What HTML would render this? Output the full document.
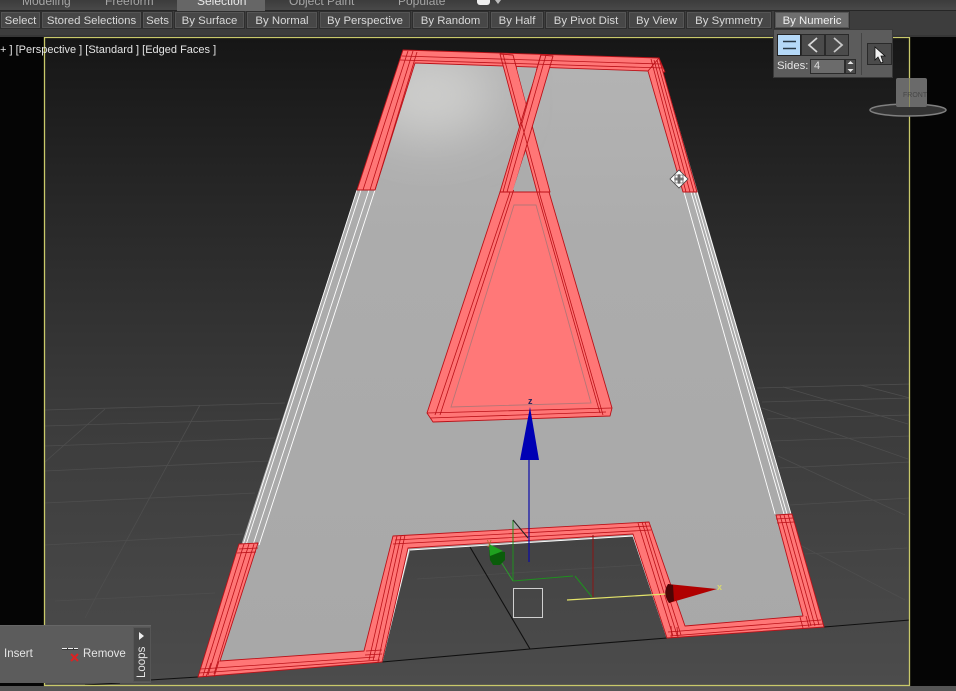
<!DOCTYPE html>
<html><head><meta charset="utf-8">
<style>
html,body{margin:0;padding:0;background:#000}
#r{position:relative;width:956px;height:691px;overflow:hidden;font-family:"Liberation Sans",sans-serif;color:#e2e2e2;font-size:11.5px}
#r svg{position:absolute;left:0;top:0}
.t{position:absolute;white-space:nowrap}
.b{position:absolute;top:11px;height:18px;line-height:18px;background:#474747;border:1px solid #2e2e2e;box-sizing:border-box;text-align:center;box-shadow:inset 0 0 0 1px #555;color:#d8d8d8;font-size:11.4px}
.tab{position:absolute;top:-6px;font-size:12px;color:#a5a5a5;white-space:nowrap}
</style></head><body><div id="r">
<svg width="956" height="691" viewBox="0 0 956 691">
<defs>
<linearGradient id="bg" x1="0" y1="0" x2="0" y2="1"><stop offset="0" stop-color="#161616"/><stop offset=".25" stop-color="#272727"/><stop offset=".6" stop-color="#3c3c3c"/><stop offset="1" stop-color="#4c4c4c"/></linearGradient>
<linearGradient id="gr" x1="0" y1="0" x2="0" y2="1"><stop offset="0" stop-color="#b4b4b4"/><stop offset=".3" stop-color="#acacac"/><stop offset="1" stop-color="#a8a8a8"/></linearGradient>
<filter id="bl" x="-60%" y="-60%" width="220%" height="220%"><feGaussianBlur stdDeviation="26"/></filter>
<clipPath id="ac"><path d="M403 50L659 58L824 627L667 638L633 536L410 550L382 662L198 677Z"/></clipPath>
</defs>
<rect width="956" height="691" fill="#050505"/>
<rect x="44" y="37" width="866" height="649" fill="url(#bg)"/>
<rect x="0" y="686" width="956" height="5" fill="#555"/>
<!-- grid -->
<g stroke="#4e4e4e" stroke-width=".8" fill="none">
<path d="M45 410L285 403M45 426L280 419M45 446L275 438M45 471L268 461M45 503L255 493M45 545L243 534M55 601L215 593"/>
<path d="M45 462L105 409M200 405L98 593L85 618"/>
<path d="M757 388L910 384M762 402L910 398M767 419L910 415M772 441L910 436M780 468L910 462M790 505L910 498M805 554L907 548"/>
<path d="M783 387L908 424M860 385L910 398M762 408L908 459M778 456L905 515M800 545L905 600"/>
<path d="M417 579L640 565"/>
</g>
<path d="M85 685L120 683M150 680L198 677M382 662L530 649L667 638M824 627L910 620M470 547L530 649" stroke="#101010" stroke-width="1.1" fill="none"/>
<!-- yellow frame -->
<path d="M44.500 37.500H910M909.500 37V686M44.500 37V686M44 685.500H910" stroke="#c9c96a" stroke-width="1.3" fill="none"/>
<!-- A grey -->
<path d="M403 50L659 58L824 627L667 638L633 536L410 550L382 662L198 677Z" fill="url(#gr)"/>
<g clip-path="url(#ac)"><ellipse cx="430" cy="95" rx="65" ry="42" fill="#cfcfcd" filter="url(#bl)"/></g>
<!-- white lines -->
<g stroke="#fff" stroke-width=".9" fill="none">
<path d="M357 190L243 545M361 190L246 545M369 190L253 545M375 190L259 545"/>
<path d="M684 192L775 514M691 192L784 514M694 192L787 514M697 192L791 514"/>
<path d="M410 550L633 536M409 549L382 662M633 536L667 638"/>
</g>
<!-- red bands -->
<g fill="#ff7676" stroke="#bb1118" stroke-width=".9" stroke-linejoin="round">
<path d="M403 50L659 58L665 72L648 71L415 63L375 190L357 190Z"/>
<path d="M659 58L697 192L683 192L648 71Z"/>
<path d="M500 54L513 55L550 192L537 192Z"/>
<path d="M541 55L553 56L513 192L500 192Z"/>
<path d="M500 192L549 192L612 408L610 416L433 422L427 413Z"/>
<path d="M239 544L258 543L220 661L364 651L393 536L649 522L685 626L803 616L776 515L792 514L824 627L667 638L633 534L408 548L382 662L198 677Z"/>
</g>
<!-- grey triangles over centre -->
<path d="M517 69L537 70L526 103Z" fill="#b2b2b2"/>
<path d="M524 155L535 190L513 190Z" fill="#acacac"/>
<!-- inner lines -->
<g stroke="#bb1118" stroke-width=".8" fill="none">
<path d="M402 56L661 64M400 60L663 68"/>
<path d="M408 51L363 190M413 51L370 190M417 52L375 190"/>
<path d="M651 59L686 192M654 60L690 192M657 60L694 192"/>
<path d="M503 54L540 192M541 54L503 192M546 55L507 192"/>
<path d="M501 192H549"/>
<path d="M510 192L435 415M513 192L440 415"/>
<path d="M537 192L600 413M539 192L603 415"/>
<path d="M427 413L612 408M430 418L606 412"/>
<path d="M244 544L203 676M249 544L208 675M254 544L214 674"/>
<path d="M239 549L258 548M237 553L256 552"/>
<path d="M201 669L375 657M199 673L380 660"/>
<path d="M219 661L214 677M211 663L206 677"/>
<path d="M397 536L369 660M401 536L373 661M405 535L378 662M366 651L382 650M365 655L382 654"/>
<path d="M395 540L650 526M393 544L651 530"/>
<path d="M638 523L673 636M642 522L677 635M645 522L681 635"/>
<path d="M668 632L821 620M670 636L823 624M671 626L672 638M677 627L678 638"/>
<path d="M780 515L811 626M784 515L815 626M788 514L819 625M776 519L793 518M777 523L794 522"/>
<path d="M800 617L803 628M806 616L809 627"/>
</g>
<path d="M514 205L536 205L591 403L451 407Z" fill="#ff7878" stroke="#b57676" stroke-width=".9"/>
<!-- transform gizmo -->
<path d="M529 562V425" stroke="#0a0aa8" stroke-width="1.2"/>
<path d="M520 460L539 460L530 407Z" fill="#0000b4"/>
<text x="528" y="404" font-family="Liberation Sans,sans-serif" font-size="9" font-weight="700" fill="#22225a">z</text>
<path d="M513 520V580M513 581L573 576M575 576L592 597" stroke="#1f8f1f" stroke-width="1" fill="none"/>
<path d="M513 520L528 538" stroke="#222" fill="none"/>
<path d="M513 581L498 557" stroke="#2c9c2c" stroke-width="1"/>
<path d="M489 550L505 552V560L500 565H493L490 560Z" fill="#0a5c0a"/>
<path d="M489 544L503 551L490 556Z" fill="#1fa01f"/>
<text x="487" y="545" font-family="Liberation Sans,sans-serif" font-size="9" fill="#b06a30">y</text>
<path d="M593 535V597" stroke="#8a1515" stroke-width="1"/>
<path d="M567 600L666 594" stroke="#e3e36a" stroke-width="1.2"/>
<path d="M668 584L717 589L669 603Z" fill="#b00000"/>
<path d="M668 584Q662 593 669 603L674 601L673 585Z" fill="#4c0505"/>
<text x="717" y="590" font-family="Liberation Sans,sans-serif" font-size="9" font-weight="700" fill="#d8d870">x</text>
<rect x="513.500" y="588.500" width="29" height="29" fill="none" stroke="#d0d0d0" stroke-width="1"/>
<!-- move cursor -->
<g transform="translate(679,179)"><path d="M0-9L9 0L0 9L-9 0Z" fill="#fff" stroke="#444" stroke-width=".8"/><path d="M-5 0H5M0-5V5" stroke="#222" stroke-width=".8" fill="none"/><path d="M-4-4H-1V-1H-4ZM1-4H4V-1H1ZM-4 1H-1V4H-4ZM1 1H4V4H1Z" stroke="#333" stroke-width=".6" fill="none"/></g>
<!-- view cube -->
<ellipse cx="908" cy="110" rx="38" ry="6" fill="#333" stroke="#808080" stroke-width="1.5"/>
<rect x="896" y="78" width="31" height="29" rx="2" fill="#6a6a6a"/>
<path d="M909.500 78V107" stroke="#8e8e60" stroke-width="1"/>
<text x="903" y="97" font-family="Liberation Sans,sans-serif" font-size="7" fill="#474747">FRONT</text>
</svg>

<!-- toolbar -->
<div style="position:absolute;left:0;top:0;width:956px;height:11px;background:linear-gradient(#3c3c3c,#4a4a4a)"></div>
<div style="position:absolute;left:0;top:10px;width:956px;height:27px;background:#3d3d3d;border-top:1px solid #262626;box-sizing:border-box"></div>
<div style="position:absolute;left:177px;top:0;width:88px;height:11px;background:#666"></div>
<div class="tab" style="left:22px">Modeling</div>
<div class="tab" style="left:105px">Freeform</div>
<div class="tab" style="left:197px;color:#e8e8e8">Selection</div>
<div class="tab" style="left:289px">Object Paint</div>
<div class="tab" style="left:398px">Populate</div>
<div style="position:absolute;left:477px;top:0;width:13px;height:5px;background:#eee;border-radius:0 0 3px 3px"></div>
<div style="position:absolute;left:495px;top:0;width:0;height:0;border:3px solid transparent;border-top:4px solid #bbb"></div>
<div class="b" style="left:0;width:41px">Select</div>
<div class="b" style="left:41px;width:101px">Stored Selections</div>
<div class="b" style="left:142px;width:31px">Sets</div>
<div class="b" style="left:174px;width:71px">By Surface</div>
<div class="b" style="left:246px;width:72px">By Normal</div>
<div class="b" style="left:319px;width:92px">By Perspective</div>
<div class="b" style="left:412px;width:77px">By Random</div>
<div class="b" style="left:490px;width:54px">By Half</div>
<div class="b" style="left:545px;width:82px">By Pivot Dist</div>
<div class="b" style="left:628px;width:57px">By View</div>
<div class="b" style="left:686px;width:86px">By Symmetry</div>
<div class="b" style="left:774px;width:76px;background:#6e6e6e;color:#efefef">By Numeric</div>
<div style="position:absolute;left:0;top:35px;width:956px;height:2px;background:#363636"></div>

<div class="t" style="left:0;top:44px;font-size:11px;color:#e4e4e4">+ ] [Perspective ] [Standard ] [Edged Faces ]</div>

<!-- popup -->
<div style="position:absolute;left:773px;top:29px;width:120px;height:49px;background:#5c5c5c;border:1px solid #383838;box-sizing:border-box"></div>
<div style="position:absolute;left:777px;top:34px;width:24px;height:22px;background:#b5d9f8;border:1px solid #222;box-sizing:border-box"></div>
<div style="position:absolute;left:801px;top:34px;width:24px;height:22px;background:#4b4b4b;border:1px solid #2a2a2a;box-sizing:border-box"></div>
<div style="position:absolute;left:825px;top:34px;width:24px;height:22px;background:#4b4b4b;border:1px solid #2a2a2a;box-sizing:border-box"></div>
<div style="position:absolute;left:861px;top:33px;width:1px;height:42px;background:#444"></div>
<div style="position:absolute;left:867px;top:43px;width:25px;height:22px;background:#4b4b4b;border:1px solid #2a2a2a;box-sizing:border-box"></div>
<div class="t" style="left:777px;top:60px;color:#e6e6e6;font-size:11.300px">Sides:</div>
<div style="position:absolute;left:810px;top:59px;width:35px;height:15px;background:#6b6b6b;border:1px solid #2b2b2b;box-sizing:border-box;font-size:11px;line-height:13px;padding-left:3px;color:#ddd">4</div>
<div style="position:absolute;left:845px;top:59px;width:11px;height:15px;background:#4a4a4a;border:1px solid #2b2b2b;box-sizing:border-box"></div>
<svg width="956" height="691" viewBox="0 0 956 691" style="pointer-events:none">
<path d="M783 41.500H796M783 48.500H796" stroke="#2a3a48" stroke-width="1.500"/>
<path d="M817 38L809 45L817 52" stroke="#d8d8d8" stroke-width="1.800" fill="none"/>
<path d="M834 38L842 45L834 52" stroke="#c8c8c8" stroke-width="1.800" fill="none"/>
<path d="M875 47V60L878 57L881 63L883 62L881 56L885 56Z" fill="#f2f2f2" stroke="#111" stroke-width=".8"/>
<path d="M847.500 64H853.500L850.500 61ZM847.500 69H853.500L850.500 72Z" fill="#e8e8e8"/>
</svg>

<!-- loops panel -->
<div style="position:absolute;left:0;top:625px;width:151px;height:58px;background:#5c5c5c;border-top:1px solid #666;box-sizing:border-box"></div>
<div style="position:absolute;left:133px;top:627px;width:18px;height:55px;background:#474747;border:1px solid #565656;box-sizing:border-box"></div>
<div class="t" style="left:4px;top:648px;color:#e6e6e6">Insert</div>
<div class="t" style="left:83px;top:648px;color:#e6e6e6">Remove</div>
<div class="t" style="left:134.500px;top:678px;transform-origin:0 0;transform:rotate(-90deg);color:#e6e6e6;line-height:14px;height:14px;width:34px">Loops</div>
<svg width="956" height="691" viewBox="0 0 956 691">
<path d="M62 649H78" stroke="#111" stroke-width="1"/><path d="M62 648.500H78" stroke="#eee" stroke-width="1" stroke-dasharray="5 1"/>
<path d="M71 654L78 661M78 654L71 661" stroke="#d22" stroke-width="2"/>
<path d="M139 632V640L144 636Z" fill="#eee"/>
</svg>
</div></body></html>
